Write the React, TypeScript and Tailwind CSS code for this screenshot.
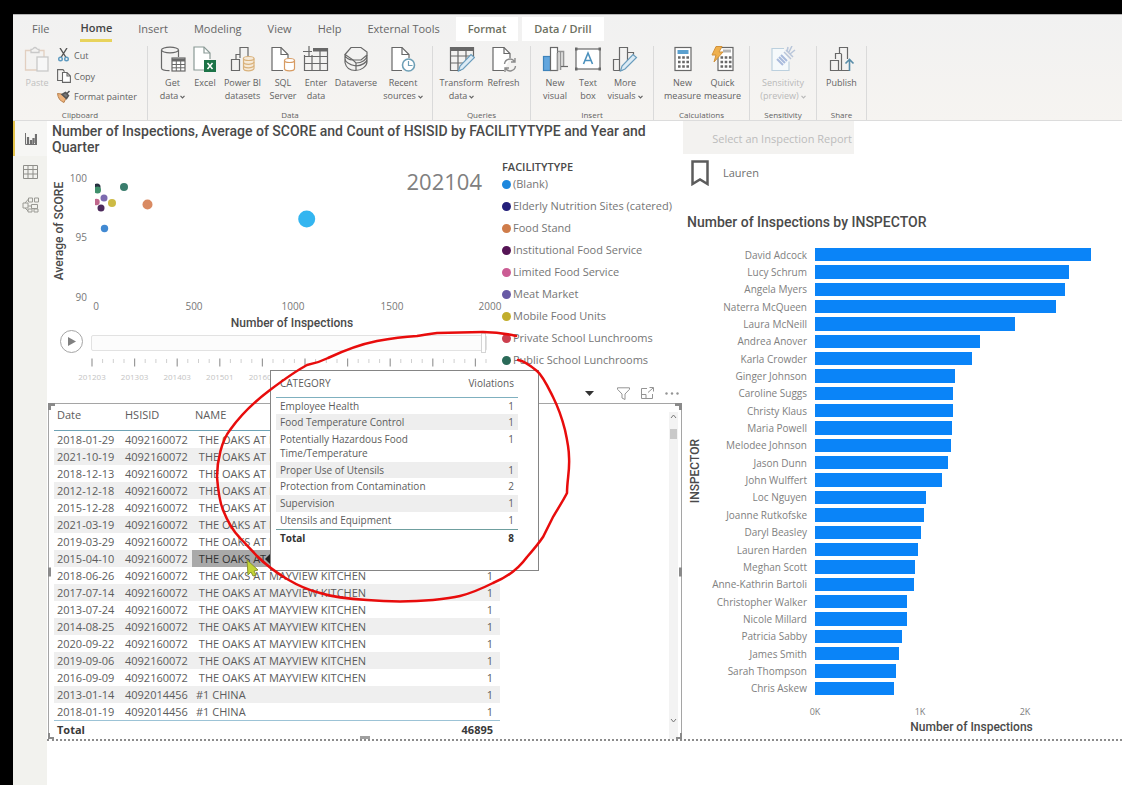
import React from 'react';

type IconProps = { children: React.ReactNode; w?: number; h?: number };

function Glyph({ children, w = 26, h = 26 }: IconProps) {
  return (
    <svg className="shrink-0" width={w} height={h} viewBox={`0 0 ${w} ${h}`} fill="none" stroke="#686868" strokeWidth="1.2" aria-hidden="true">
      {children}
    </svg>
  );
}

const icons: Record<string, React.ReactNode> = {
  getData: (
    <Glyph>
      <ellipse cx="10" cy="4" rx="8.5" ry="2.8" />
      <path d="M1.500 4v18c0 1.600 3.500 2.700 8 2.700M18.500 4v7" />
      <rect x="12" y="12" width="13" height="13" fill="#fff" />
      <path d="M12 14h13" strokeWidth="3" />
      <path d="M12 18.500h13M12 21.800h13M16.300 14v11M20.700 14v11" strokeWidth="1" />
    </Glyph>
  ),
  excel: (
    <Glyph>
      <path d="M18 13V7l-6-6H2v23h10" fill="#fff" stroke="#8a9a96" />
      <path d="M12 1v6h6" stroke="#8a9a96" />
      <rect x="12" y="14" width="12" height="12" fill="#1c7347" stroke="none" />
      <path d="M15.500 17l5 6M20.500 17l-5 6" stroke="#fff" strokeWidth="1.5" />
    </Glyph>
  ),
  powerBi: (
    <Glyph>
      <path d="M10 12V1.500h8V11M6 13V8.500h4M1.500 24.500V13.500h8v11z" />
      <path d="M13.500 12.500v10c0 1.300 2.500 2.300 5 2.300s5.500-1 5.500-2.300v-10" fill="#f6ead9" stroke="#d9b27c" />
      <ellipse cx="18.700" cy="12.500" rx="5.300" ry="2" fill="#f6ead9" stroke="#d9b27c" />
      <path d="M13.500 16c0 1.300 2.500 2.300 5 2.300s5.500-1 5.500-2.300M13.500 19.500c0 1.300 2.500 2.300 5 2.300s5.500-1 5.500-2.300" stroke="#d9b27c" />
    </Glyph>
  ),
  sql: (
    <Glyph>
      <path d="M13 24.500H2V1.500h9l7 7V12" fill="#fff" />
      <path d="M11 1.500v7h7" />
      <path d="M14.500 14.500v8c0 1.300 2.300 2.300 5 2.300s5-1 5-2.300v-8" fill="#fff" stroke="#d79b62" />
      <ellipse cx="19.500" cy="14.500" rx="5" ry="2" fill="#fff" stroke="#d79b62" />
    </Glyph>
  ),
  enter: (
    <Glyph>
      <path d="M10 2.500h14.500v22h-23V9" />
      <path d="M10 4h15" strokeWidth="3" />
      <path d="M1.500 10.500h23M1.500 17.500h23M9 9v15.500M17 2.500v22" />
      <path d="M0 5.500h9M6 0v10" />
    </Glyph>
  ),
  dataverse: (
    <Glyph>
      <path d="M8 1.500h10l6 4.500v3l-6 5H10L2 8.500z" />
      <path d="M2 8.500c0 3.500 4 5.500 8 5.500l3 3c6 0 11-3.500 11-8M2 8.500v8M24 9v6.500M2 12.500c0 4 4 6 11 7.500 6-.5 11-3.500 11-7M2 16.500c1 5 5 8 10.500 8S24 20.500 24 15.500M13 17v7.500" />
    </Glyph>
  ),
  recent: (
    <Glyph>
      <path d="M12 24.500H2V1.500h10l7 7V12" fill="#fff" />
      <path d="M12 1.500v7h7" />
      <circle cx="18.500" cy="19" r="6" fill="#fff" stroke="#6d9fb6" strokeWidth="1.600" />
      <path d="M18.500 15v4.500h4" stroke="#6d9fb6" />
    </Glyph>
  ),
  transform: (
    <Glyph>
      <path d="M12 24.500H1.500v-23h23V12" />
      <path d="M1.500 3.500h23" strokeWidth="3" />
      <path d="M1.500 10h23M1.500 17h14M9 2.500v22M17 2.500V14" />
      <path d="M9.500 25l1.500-5L22 8.500l3.500 3L14 23z" fill="#dcebf5" stroke="#6a9dbd" />
    </Glyph>
  ),
  refresh: (
    <Glyph>
      <path d="M13 24.500H2V1.500h11l6 6V12" fill="#fff" />
      <path d="M13 1.500v6h6" />
      <path d="M13.500 18a5.500 5.500 0 0110-2.500M24.500 20a5.500 5.500 0 01-10 2.500M24 12v4h-4M14 26v-4h4" stroke="#8c8c8c" strokeWidth="1.400" />
    </Glyph>
  ),
  newVisual: (
    <Glyph>
      <rect x="1.500" y="10.500" width="7" height="14" fill="#62a6de" stroke="#3d83bb" />
      <rect x="8.500" y="1.500" width="7" height="23" fill="#fff" />
      <path d="M15.500 5.500h6v15M15.500 24.500V7M18.500 6v18" stroke="#959595" strokeWidth="1.600" />
      <path d="M19 20.500h7" />
    </Glyph>
  ),
  textBox: (
    <Glyph>
      <rect x="1" y="3" width="24" height="20" fill="#fff" />
      <path d="M0 3h2.500M23.500 3H26M0 23h2.500M23.500 23H26" strokeWidth="3" />
      <path d="M8.500 18L13 7l4.500 11M10 14.500h6" stroke="#4c91bd" strokeWidth="1.600" />
    </Glyph>
  ),
  moreVisuals: (
    <Glyph>
      <path d="M1.500 24.500v-11h6M7.500 24.500v-23h8v14M15.500 6.500h6V10M1.500 24.500h9" />
      <path d="M8.500 25l1.500-5L21 8.500l3.500 3L13 23z" fill="#dcebf5" stroke="#6a9dbd" />
    </Glyph>
  ),
  calc: (
    <Glyph>
      <rect x="5" y="1.500" width="16" height="23" fill="#fff" />
      <rect x="7.500" y="4" width="11" height="4" fill="#5aa0cf" stroke="none" />
      <path d="M8 11.500h11M8 16h11M8 20.500h11" strokeWidth="2.600" strokeDasharray="2.600 1.600" />
    </Glyph>
  ),
  quick: (
    <Glyph>
      <rect x="8" y="1.500" width="15" height="23" fill="#fff" />
      <path d="M13 5h8" stroke="#b5b5b5" strokeWidth="3" />
      <path d="M10.500 11.500h11M10.500 16h11M10.500 20.500h11" strokeWidth="2.600" strokeDasharray="2.600 1.600" />
      <path d="M6 0.500h6l-3 5.500h4L4 16l2-7H2z" fill="#efb04d" stroke="#d1913a" strokeWidth="1" />
    </Glyph>
  ),
  sensitivity: (
    <Glyph>
      <path d="M14 2.500H2v22h17v-9" stroke="#bcd0de" fill="#f5f9fb" />
      <path d="M7 13l6 6M9 11l6 6M11 9l6 6" stroke="#a9bbdc" strokeWidth="2" />
      <path d="M14 6l7 7M16 4l7 7M18 1l-1 5M22 0l-3 6M25 4l-5 4" stroke="#b9c6da" strokeWidth="1.500" />
    </Glyph>
  ),
  publish: (
    <Glyph>
      <path d="M10.500 7V1.500h8V13M6.500 13V7.500h6M1.500 24.500v-10h8v10zM12.500 8v16.500H17M9.500 24.500H20" />
      <path d="M20.500 25V14M16.500 17.500l4-4 4 4" stroke="#578ca8" strokeWidth="1.600" />
    </Glyph>
  ),
};

type Tool = { icon: string; lines: string[]; width: string; menu?: boolean; faded?: boolean };
type Group = { label: string; width: string; tools: Tool[] };

const groups: Group[] = [
  {
    label: 'Data',
    width: 'w-[285px]',
    tools: [
      { icon: 'getData', lines: ['Get', 'data'], width: 'w-[33px]', menu: true },
      { icon: 'excel', lines: ['Excel'], width: 'w-8' },
      { icon: 'powerBi', lines: ['Power BI', 'datasets'], width: 'w-[43px]' },
      { icon: 'sql', lines: ['SQL', 'Server'], width: 'w-[38px]' },
      { icon: 'enter', lines: ['Enter', 'data'], width: 'w-7' },
      { icon: 'dataverse', lines: ['Dataverse'], width: 'w-[52px]' },
      { icon: 'recent', lines: ['Recent', 'sources'], width: 'w-[42px]', menu: true },
    ],
  },
  {
    label: 'Queries',
    width: 'w-[98px]',
    tools: [
      { icon: 'transform', lines: ['Transform', 'data'], width: 'w-11', menu: true },
      { icon: 'refresh', lines: ['Refresh'], width: 'w-10' },
    ],
  },
  {
    label: 'Insert',
    width: 'w-[123px]',
    tools: [
      { icon: 'newVisual', lines: ['New', 'visual'], width: 'w-8' },
      { icon: 'textBox', lines: ['Text', 'box'], width: 'w-[34px]' },
      { icon: 'moreVisuals', lines: ['More', 'visuals'], width: 'w-10', menu: true },
    ],
  },
  {
    label: 'Calculations',
    width: 'w-24',
    tools: [
      { icon: 'calc', lines: ['New', 'measure'], width: 'w-[42px]' },
      { icon: 'quick', lines: ['Quick', 'measure'], width: 'w-[38px]' },
    ],
  },
  {
    label: 'Sensitivity',
    width: 'w-[67px]',
    tools: [{ icon: 'sensitivity', lines: ['Sensitivity', '(preview)'], width: 'w-12', menu: true, faded: true }],
  },
  {
    label: 'Share',
    width: 'w-[50px]',
    tools: [{ icon: 'publish', lines: ['Publish'], width: 'w-10' }],
  },
];

function Chevron() {
  return (
    <svg className="ml-0.5 inline-block" width="5" height="4" viewBox="0 0 5 4" fill="none" stroke="currentColor" strokeWidth="1.2" aria-hidden="true">
      <path d="M0.500 0.800l2 2 2-2" />
    </svg>
  );
}

function Tabs() {
  const plain = ['Insert', 'Modeling', 'View', 'Help', 'External Tools'];
  return (
    <nav className="flex h-[26px] items-stretch pt-0.5 pl-1.5 text-[11px] leading-[22px] text-[#666]">
      <button className="px-[13px]">File</button>
      <button className="ml-[5px] px-[13px] font-semibold text-[#444]">
        <span className="block border-b-3 border-[#e8d35c]">Home</span>
      </button>
      {plain.map((t) => (
        <button key={t} className="px-[13px]">{t}</button>
      ))}
      <button className="ml-[3px] bg-white px-3 font-semibold text-[#6c6f60]">Format</button>
      <button className="ml-1 bg-white px-3 font-semibold text-[#6c6f60]">Data / Drill</button>
    </nav>
  );
}

function Ribbon() {
  return (
    <div className="flex h-[80px] border-b border-[#dcdcdc] pt-[5px] text-[9px] leading-[13px] text-[#626262]">
      <section className="flex w-[135px] flex-col border-r border-[#dadada]">
        <div className="flex flex-1">
          <button className="flex w-[44px] flex-col items-center pl-1 text-[#c0c0c0]">
            <svg className="shrink-0" width="26" height="26" viewBox="0 0 26 26" fill="none" stroke="#c9c9c9" strokeWidth="1.3" aria-hidden="true">
              <path d="M13 24H1.500V4.500H7M15 4.500h5V11" stroke="#e2cfc0" />
              <path d="M7 6.500V3.500c3 0 2-2 4-2s1 2 4 2v3z" />
              <rect x="13" y="11" width="11" height="14" fill="#f7f7f7" />
            </svg>
            <span className="mt-1">Paste</span>
          </button>
          <div className="flex flex-col gap-[7px] pt-0.5">
            <button className="flex items-center gap-[3px]">
              <svg width="14" height="14" viewBox="0 0 14 14" fill="none" stroke="#555" strokeWidth="1.4" aria-hidden="true">
                <path d="M3 0l6 9.500M10 0L4 9.500" />
                <circle cx="3.500" cy="11" r="1.800" stroke="#5d9ac0" />
                <circle cx="9.500" cy="11" r="1.800" stroke="#5d9ac0" />
              </svg>
              Cut
            </button>
            <button className="flex items-center gap-[3px]">
              <svg width="14" height="14" viewBox="0 0 14 14" fill="none" stroke="#666" strokeWidth="1.1" aria-hidden="true">
                <path d="M5 11.500H0.600V0.600H6l1.500 2" />
                <path d="M5.500 3.500H10l3.400 3.400v6.500H5.500zM10 3.500V7h3.400" fill="#fff" />
              </svg>
              Copy
            </button>
            <button className="flex items-center gap-[3px] whitespace-nowrap">
              <svg width="14" height="13" viewBox="0 0 14 13" fill="none" aria-hidden="true">
                <path d="M0.500 3.500l4 .5 4.500 4-2 4.500C3 11 1 8 0.500 3.500z" fill="#eeb27a" stroke="#b98350" />
                <path d="M5 4.500l3.500-2 3 3L9.500 8.500zM10 3.500L12.500 1" stroke="#555" strokeWidth="1.500" fill="#777" />
              </svg>
              Format painter
            </button>
          </div>
        </div>
        <span className="text-center text-[8px] leading-[11px]">Clipboard</span>
      </section>
      {groups.map((g) => (
        <section key={g.label} className={`flex flex-col border-r border-[#dadada] ${g.width}`}>
          <div className="flex flex-1 justify-center">
            {g.tools.map((t) => (
              <button
                key={t.icon}
                className={`flex flex-col items-center whitespace-nowrap ${t.width} ${t.faded ? 'text-[#b9b9b9]' : ''}`}
              >
                {icons[t.icon]}
                <span className="mt-1">{t.lines[0]}</span>
                {t.lines[1] && (
                  <span>
                    {t.lines[1]}
                    {t.menu && <Chevron />}
                  </span>
                )}
              </button>
            ))}
          </div>
          <span className="text-center text-[8px] leading-[11px]">{g.label}</span>
        </section>
      ))}
    </div>
  );
}

function Sidebar() {
  return (
    <aside className="flex w-[34px] shrink-0 flex-col bg-[#f2f2ee]">
      <button aria-label="Report view" className="flex h-[35px] items-center justify-center border-l-2 border-[#e3c34c] bg-[#f6f6f4]">
        <svg width="12" height="12" viewBox="0 0 12 12" fill="none" stroke="#707070" aria-hidden="true">
          <path d="M0.500 0v11.500H12" />
          <path d="M3 4v7M6 7v4M8.500 5v6M11 1v10" strokeWidth="2.200" />
        </svg>
      </button>
      <button aria-label="Data view" className="flex h-[31px] items-center justify-center">
        <svg width="15" height="14" viewBox="0 0 15 14" fill="none" stroke="#8f8f8a" aria-hidden="true">
          <path d="M0.500 0.500h14v13H0.500zM0.500 4.500h14M0.500 9h14M5 0.500v13M10 0.500v13" />
        </svg>
      </button>
      <button aria-label="Model view" className="flex h-9 items-center justify-center">
        <svg width="17" height="16" viewBox="0 0 17 16" fill="none" stroke="#9a9a94" aria-hidden="true">
          <path d="M6.500 1h4v4h-4zM12.500 1h4v4h-4zM1 6h5v5H1zM9.500 7.500h6v4h-6zM6 12h4v3H6zM12 12h4v3h-4zM3 6l3.500-4M6 9h3.500M3 11l3 3" />
        </svg>
      </button>
    </aside>
  );
}

const points = [
  { x: 97, y: 187, r: 3.500, c: '#27303f' },
  { x: 97.500, y: 190, r: 3.500, c: '#3f8f6b' },
  { x: 124, y: 187, r: 4, c: '#3a7d6d' },
  { x: 96.500, y: 202, r: 3.200, c: '#c0668c' },
  { x: 104, y: 198, r: 3.500, c: '#7d6bb0' },
  { x: 112, y: 203, r: 4, c: '#cdbb45' },
  { x: 101, y: 208, r: 3.500, c: '#4d2a5c' },
  { x: 147.500, y: 204.500, r: 5, c: '#d98a62' },
  { x: 306.700, y: 219, r: 8.500, c: '#33b5f0' },
  { x: 104.500, y: 228.500, r: 3.700, c: '#4189d2' },
];

const legend = [
  ['(Blank)', '#1d87dd'],
  ['Elderly Nutrition Sites (catered)', '#241f7a'],
  ['Food Stand', '#cf7c4a'],
  ['Institutional Food Service', '#551455'],
  ['Limited Food Service', '#cb5c94'],
  ['Meat Market', '#685aa5'],
  ['Mobile Food Units', '#c2ae2c'],
  ['Private School Lunchrooms', '#cc3f4e'],
  ['Public School Lunchrooms', '#2a6a58'],
];

function Scatter() {
  const xs: [number, string][] = [[96, '0'], [194, '500'], [293, '1000'], [392, '1500'], [490, '2000']];
  const ys: [number, string][] = [[182, '100'], [241, '95'], [301, '90']];
  const periods = ['201203', '201303', '201403', '201501', '201603', '201701', '201803', '201901', '202003', '202101'];
  return (
    <section>
      <h2 className="h-[34px] pt-0.5 pl-[5px] font-['Roboto'] text-[14px] leading-4 font-medium text-[#4a4a4a]">
        Number of Inspections, Average of SCORE and Count of HSISID by FACILITYTYPE and Year and
        <br />
        Quarter
      </h2>
      <div className="flex h-[228px]">
        <div className="w-[455px] shrink-0">
          <svg className="block" width="455" height="175" viewBox="47 155 455 175" role="img" aria-label="Average of SCORE by Number of Inspections">
            <defs>
              <clipPath id="plot">
                <rect x="95" y="170" width="396" height="130" />
              </clipPath>
            </defs>
            <g fill="#777" fontSize="10">
              {ys.map(([y, t]) => (
                <text key={t} x="87" y={y} textAnchor="end">{t}</text>
              ))}
              {xs.map(([x, t]) => (
                <text key={t} x={x} y="310" textAnchor="middle">{t}</text>
              ))}
            </g>
            <g fill="#4a4a4a" fontFamily="Roboto" fontSize="12" fontWeight="500" textAnchor="middle">
              <text x="292" y="327">Number of Inspections</text>
              <text transform="translate(63 231) rotate(-90)">Average of SCORE</text>
            </g>
            <text x="482" y="190" fontSize="22" fill="#808080" textAnchor="end">202104</text>
            <g clipPath="url(#plot)">
              {points.map((p) => (
                <circle key={`${p.x}-${p.y}`} cx={p.x} cy={p.y} r={p.r} fill={p.c} />
              ))}
            </g>
          </svg>
          <div className="flex h-[23px] items-start gap-2 pl-[13px]">
            <button aria-label="Play" className="flex size-[23px] shrink-0 items-center justify-center rounded-full border-[1.5px] border-[#a5a5a5]">
              <svg width="9" height="9" viewBox="0 0 9 9" fill="#808080" aria-hidden="true">
                <path d="M1 0l8 4.500L1 9z" />
              </svg>
            </button>
            <input
              type="range"
              aria-label="Year and Quarter"
              min="0"
              max="39"
              defaultValue="39"
              className="mt-[5px] h-4 w-[396px] appearance-none rounded-xs border border-[#e2e2e2] bg-[#fcfcfc] [&::-webkit-slider-thumb]:h-5 [&::-webkit-slider-thumb]:w-[5px] [&::-webkit-slider-thumb]:appearance-none [&::-webkit-slider-thumb]:border [&::-webkit-slider-thumb]:border-[#d5d5d5] [&::-webkit-slider-thumb]:bg-white"
            />
          </div>
          <svg className="block" width="455" height="30" viewBox="47 353 455 30" aria-hidden="true">
            {periods.map((p, i) => {
              const x = 92 + i * 42.600;
              return (
                <g key={p}>
                  <path d={`M${x} 358.500v8`} stroke="#9a9a9a" strokeWidth="1.200" />
                  {[10.600, 21.300, 32].map((d) => (
                    <path key={d} d={`M${x + d} 359v4`} stroke="#cfcfcf" display={x + d > 487 ? 'none' : undefined} />
                  ))}
                  {i < 5 && (
                    <text x={x} y="380" fontSize="8" fill="#c4c4c4" textAnchor="middle">{p}</text>
                  )}
                </g>
              );
            })}
          </svg>
        </div>
        <div className="pt-1 text-[11px] text-[#757575]">
          <h3 className="h-[14px] leading-4 font-semibold text-[#4a4a4a]">FACILITYTYPE</h3>
          <ul className="flex h-[198px] flex-col">
            {legend.map(([name, color]) => (
              <li key={name} className="flex flex-1 items-center gap-0.5 whitespace-nowrap">
                <span className="size-[9px] rounded-full" style={{ backgroundColor: color }} />
                {name}
              </li>
            ))}
          </ul>
        </div>
      </div>
    </section>
  );
}

const oaks = ' THE OAKS AT MAYVIEW KITCHEN';
const inspections: [string, string, string][] = [
  ...['2018-01-29', '2021-10-19', '2018-12-13', '2012-12-18', '2015-12-28', '2021-03-19', '2019-03-29', '2015-04-10',
    '2018-06-26', '2017-07-14', '2013-07-24', '2014-08-25', '2020-09-22', '2019-09-06', '2016-09-09',
  ].map((d): [string, string, string] => [d, '4092160072', oaks]),
  ['2013-01-14', '4092014456', '#1 CHINA'],
  ['2018-01-19', '4092014456', '#1 CHINA'],
];

function Toolbar() {
  return (
    <div className="flex h-5 items-center justify-end gap-[11px] pr-1 text-[#949494]">
      <button aria-label="Sort" className="mr-3">
        <svg width="9" height="5" viewBox="0 0 9 5" fill="#333" aria-hidden="true"><path d="M0 0h9L4.500 5z" /></svg>
      </button>
      <button aria-label="Filters">
        <svg width="13" height="13" viewBox="0 0 13 13" fill="none" stroke="currentColor" aria-hidden="true">
          <path d="M0.500 0.800h12v1.500L8 7v5.500l-3-1.500V7L0.500 2.300z" />
        </svg>
      </button>
      <button aria-label="Focus mode">
        <svg width="13" height="12" viewBox="0 0 13 12" fill="none" stroke="currentColor" aria-hidden="true">
          <path d="M6 1.500H0.500v10h11V7M0.500 7.500H5v4M7 5.500L12 1M8.500 0.500h4v4" />
        </svg>
      </button>
      <button aria-label="More options">
        <svg width="14" height="3" viewBox="0 0 14 3" fill="currentColor" aria-hidden="true">
          <circle cx="1.500" cy="1.500" r="1.200" /><circle cx="7" cy="1.500" r="1.200" /><circle cx="12.500" cy="1.500" r="1.200" />
        </svg>
      </button>
    </div>
  );
}

function InspectionTable() {
  return (
    <section className="relative ml-px flex h-[336px] w-[634px] justify-between border-x border-t border-[#a5a5a5] pl-[5px]">
      <table className="h-min w-[446px] table-fixed border-collapse text-[11px] leading-[17px] text-[#5c5c5c]">
        <colgroup>
          <col className="w-[68px]" />
          <col className="w-[70px]" />
          <col />
          <col className="w-[60px]" />
        </colgroup>
        <thead>
          <tr className="h-[26px] border-b border-[#6fa3b5] text-left [&>th]:py-0 [&>th]:pb-1 [&>th]:pl-[3px] [&>th]:font-normal">
            <th>Date</th>
            <th>HSISID</th>
            <th>NAME</th>
            <th aria-label="Count" />
          </tr>
        </thead>
        <tbody>
          {inspections.map(([date, id, name], i) => (
            <tr key={date} className={i % 2 ? 'bg-[#efefef]' : ''}>
              <td className="p-0 pl-[3px]">{date}</td>
              <td className="p-0 pl-[3px]">{id}</td>
              <td className={`p-0 pl-1 whitespace-pre ${i === 7 ? 'bg-[#a9a9a9] text-[#333]' : ''}`}>{name}</td>
              <td className="p-0 pr-[7px] text-right">1</td>
            </tr>
          ))}
        </tbody>
        <tfoot>
          <tr className="border-t border-[#9cc3d6] font-bold text-[#3a3a3a]">
            <td className="p-0 pl-[3px]" colSpan={3}>Total</td>
            <td className="p-0 pr-[7px] text-right">46895</td>
          </tr>
        </tfoot>
      </table>
      <div className="mt-2 mr-[3px] flex w-[9px] flex-col items-center justify-between bg-[#f3f3f3] pb-4">
        <div className="flex flex-col items-center gap-2 pt-0.5">
          <svg width="7" height="5" viewBox="0 0 7 5" fill="none" stroke="#777" aria-hidden="true"><path d="M1 4l2.500-3L6 4" /></svg>
          <span className="mt-0.5 h-[10px] w-[7px] bg-[#c9c9c9]" />
        </div>
        <svg width="7" height="5" viewBox="0 0 7 5" fill="none" stroke="#777" aria-hidden="true"><path d="M1 1l2.500 3L6 1" /></svg>
      </div>
      <span className="absolute -top-px -left-px size-[7px] border-t-3 border-l-3 border-[#8a8a8a]" />
      <span className="absolute -top-px -right-px size-[7px] border-t-3 border-r-3 border-[#8a8a8a]" />
      <span className="absolute bottom-0 -left-px size-[6px] border-b-2 border-l-2 border-[#8a8a8a]" />
      <span className="absolute -right-px bottom-0 size-[6px] border-r-2 border-b-2 border-[#8a8a8a]" />
      <span className="absolute top-1/2 -left-px h-[9px] w-[3px] -translate-y-1/2 bg-[#8a8a8a]" />
      <span className="absolute top-1/2 -right-px h-[9px] w-[3px] -translate-y-1/2 bg-[#8a8a8a]" />
      <span className="absolute bottom-0 left-1/2 h-[3px] w-[10px] -translate-x-1/2 bg-[#a0a0a0]" />
    </section>
  );
}

const inspectors: [string, number][] = [
  ['David Adcock', 2626], ['Lucy Schrum', 2419], ['Angela Myers', 2378], ['Naterra McQueen', 2295],
  ['Laura McNeill', 1907], ['Andrea Anover', 1571], ['Karla Crowder', 1498], ['Ginger Johnson', 1330],
  ['Caroline Suggs', 1314], ['Christy Klaus', 1310], ['Maria Powell', 1302], ['Melodee Johnson', 1292],
  ['Jason Dunn', 1267], ['John Wulffert', 1212], ['Loc Nguyen', 1057], ['Joanne Rutkofske', 1036],
  ['Daryl Beasley', 1009], ['Lauren Harden', 977], ['Meghan Scott', 957], ['Anne-Kathrin Bartoli', 943],
  ['Christopher Walker', 881], ['Nicole Millard', 876], ['Patricia Sabby', 832], ['James Smith', 804],
  ['Sarah Thompson', 776], ['Chris Askew', 752],
];
const axisMax = 2924;

function InspectorChart() {
  return (
    <section>
      <h2 className="pl-1 font-['Roboto'] text-[14px] leading-4 font-medium text-[#4a4a4a]">Number of Inspections by INSPECTOR</h2>
      <div className="mt-4 flex">
        <div className="flex w-6 items-center justify-center">
          <span className="rotate-180 font-['Roboto'] text-[12px] leading-4 font-medium text-[#4a4a4a] [writing-mode:vertical-rl]">INSPECTOR</span>
        </div>
        <ul className="flex h-[451px] flex-1 flex-col text-[10px] text-[#808080]">
          {inspectors.map(([name, n]) => (
            <li key={name} className="flex flex-1 items-center">
              <span className="w-[100px] shrink-0 text-right leading-3 whitespace-nowrap">{name}</span>
              <span className="ml-2 h-full flex-1 py-0.5">
                <span className="block h-full bg-[#0a84f8]" style={{ width: `${(n / axisMax) * 100}%` }} />
              </span>
            </li>
          ))}
        </ul>
      </div>
      <svg className="ml-[132px] block h-[38px] w-[calc(100%-132px)] overflow-visible" role="img" aria-label="Number of Inspections axis">
        <g fill="#808080" fontSize="9" textAnchor="middle">
          <text x="0" y="18">0K</text>
          <text x="34.200%" y="18">1K</text>
          <text x="68.400%" y="18">2K</text>
        </g>
        <text x="51%" y="34" fill="#4a4a4a" fontFamily="Roboto" fontSize="12" fontWeight="500" textAnchor="middle">Number of Inspections</text>
      </svg>
    </section>
  );
}

const violations: [string, number][] = [
  ['Employee Health', 1],
  ['Food Temperature Control', 1],
  ['Potentially Hazardous Food Time/Temperature', 1],
  ['Proper Use of Utensils', 1],
  ['Protection from Contamination', 2],
  ['Supervision', 1],
  ['Utensils and Equipment', 1],
];

function ViolationsTooltip() {
  return (
    <div role="tooltip" className="absolute top-[370px] left-[270px] h-[201px] w-[269px] border border-[#858585] bg-white pt-[3px] pl-[5px]">
      <table className="w-[242px] table-fixed border-collapse text-[10px] leading-4 text-[#5c5c5c]">
        <thead>
          <tr className="h-[23px] border-b border-[#7fb0bf] [&>th]:p-0 [&>th]:pb-1 [&>th]:font-normal">
            <th className="w-[180px] text-left"><span className="pl-1">CATEGORY</span></th>
            <th className="text-right"><span className="pr-1">Violations</span></th>
          </tr>
        </thead>
        <tbody>
          {violations.map(([name, n], i) => (
            <tr key={name} className={i % 2 ? 'bg-[#eeeeee]' : ''}>
              <td className={`p-0 pl-1 ${i === 2 ? 'py-0.5 leading-[14px]' : i > 3 ? 'leading-[17px]' : ''}`}>{name}</td>
              <td className={`p-0 pr-1 text-right align-top ${i === 2 ? 'pt-0.5 leading-[14px]' : ''}`}>{n}</td>
            </tr>
          ))}
        </tbody>
        <tfoot>
          <tr className="border-t border-[#6f9f9f] font-bold text-[#333]">
            <td className="p-0 pl-1">Total</td>
            <td className="p-0 pr-1 text-right">8</td>
          </tr>
        </tfoot>
      </table>
    </div>
  );
}

function Annotations() {
  return (
    <svg className="pointer-events-none absolute top-0 left-0" width="1122" height="785" viewBox="0 0 1122 785" fill="none" aria-hidden="true">
      <path d="M270 554v10l-5-5z" fill="#222" />
      <path d="M247 560l1 15 3-3 2 4 3-1-2-4 4-1z" fill="#c3d435" stroke="#8a9430" />
      <path
        d="M516 336C504 333 494 332 483 332L437 333C429 334 424 335 417 336C400 337 388 339 377 341C362 344 345 350 328 358C320 362 313 364 307 365C294 372 282 381 270 390C254 402 240 416 230 430C222 440 217 460 217 477C218 490 219 500 223 510C227 520 232 530 240 538L257 556C267 566 277 573 287 579C297 585 308 590 320 593C336 598 350 599 367 600C390 602 410 602 433 600C443 599 452 598 460 596C472 593 483 588 493 583C508 577 519 568 527 557C534 549 539 543 543 537L553 517C557 510 563 501 567 493C567 480 570 470 569 457C569 448 567 439 565 430C562 418 558 407 553 397C548 387 543 376 537 371C531 366 525 361 518 360"
        stroke="#e80c0c"
        strokeWidth="2.500"
        strokeLinecap="round"
      />
    </svg>
  );
}

export default function App() {
  return (
    <div className="relative flex min-h-screen flex-col overflow-hidden bg-black pt-[14px] pl-[13px] font-['Open_Sans',sans-serif]">
      <header className="border-t border-[#b5b5b5] bg-linear-to-b from-[#f1f1f1] to-[#f6f4f1]">
        <Tabs />
        <Ribbon />
      </header>
      <div className="flex flex-1 bg-white">
        <Sidebar />
        <main className="min-w-0 flex-1">
          <div className="flex border-b-2 border-dotted border-[#8c8c8c]">
            <div className="w-[636px] shrink-0">
              <Scatter />
              <Toolbar />
              <InspectionTable />
            </div>
            <div className="min-w-0 flex-1">
              <button className="block h-[33px] w-[171px] bg-[#f3f2f0] pt-1 pr-0.5 text-right text-[11px] whitespace-nowrap text-[#bcbcbc]">
                Select an Inspection Report
              </button>
              <button className="mt-[6px] flex items-center gap-[14px] pl-2 text-[11px] text-[#707070]">
                <svg width="18" height="26" viewBox="0 0 18 26" fill="none" stroke="#5c5c5c" strokeWidth="2.500" aria-hidden="true">
                  <path d="M1.500 1.500h15v22.500L9 19.500 1.500 24z" />
                </svg>
                Lauren
              </button>
              <div className="mt-7">
                <InspectorChart />
              </div>
            </div>
          </div>
        </main>
      </div>
      <ViolationsTooltip />
      <Annotations />
    </div>
  );
}
